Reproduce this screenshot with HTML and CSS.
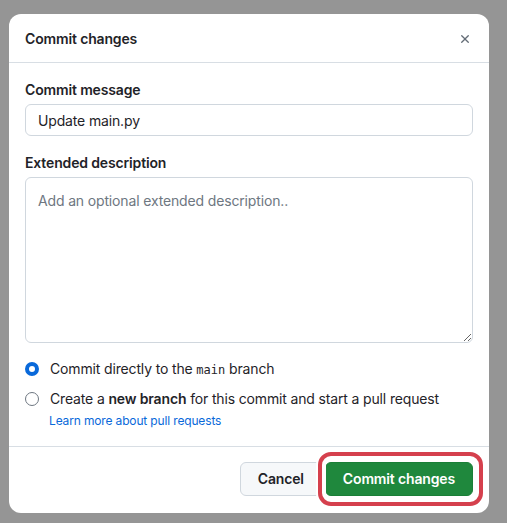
FILE: index.html
```html
<!DOCTYPE html>
<html lang="en">
<head>
<meta charset="utf-8">
<title>Commit changes</title>
<link rel="stylesheet" href="styles.css">
</head>
<body>
<div class="backdrop">
  <div class="dialog">
    <div class="dialog-header">
      <h1 class="dialog-title">Commit changes</h1>
      <button class="close-btn" aria-label="Close">
        <svg width="16" height="16" viewBox="0 0 16 16"><path d="M3.72 3.72a.75.75 0 0 1 1.06 0L8 6.94l3.22-3.22a.749.749 0 0 1 1.06 1.06L9.06 8l3.22 3.22a.749.749 0 0 1-1.060 1.06L8 9.06l-3.22 3.22a.749.749 0 0 1-1.06-1.06L6.94 8 3.72 4.780a.75.75 0 0 1 0-1.06Z" fill="currentColor"/></svg>
      </button>
    </div>
    <div class="dialog-body">
      <label class="field-label" for="msg">Commit message</label>
      <input class="text-input" id="msg" type="text" value="Update main.py">
      <label class="field-label second" for="desc">Extended description</label>
      <textarea class="text-area" id="desc" placeholder="Add an optional extended description.."></textarea>
      <div class="radio-group">
        <label class="radio-row">
          <span class="radio checked"></span>
          <span class="radio-text">Commit directly to the <code class="mono">main</code> branch</span>
        </label>
        <label class="radio-row">
          <span class="radio"></span>
          <span class="radio-text">Create a <strong>new branch</strong> for this commit and start a pull request</span>
        </label>
        <a class="learn-link" href="#">Learn more about pull requests</a>
      </div>
    </div>
    <div class="dialog-footer">
      <button class="btn btn-default">Cancel</button>
      <button class="btn btn-primary">Commit changes</button>
    </div>
  </div>
</div>
</body>
</html>
```
FILE: styles.css
```css
* { box-sizing: border-box; }
html, body {
  margin: 0;
  padding: 0;
  background: #959595;
}
body {
  font-family: Inter, "Liberation Sans", Arial, sans-serif;
  font-size: 14px;
  color: #1f2328;
  line-height: 20px;
  letter-spacing: -0.15px;
}
.backdrop {
  padding: 14px 18px 11px 9px;
}
.dialog {
  width: 480px;
  background: #ffffff;
  border-radius: 12px;
}
.dialog-header {
  height: 49px;
  display: flex;
  align-items: center;
  justify-content: space-between;
  padding: 1px 8px 0 16px;
  border-bottom: 1px solid #d8dee4;
}
.dialog-title {
  margin: 0;
  font-size: 14px;
  font-weight: 600;
  line-height: 20px;
}
.close-btn {
  width: 32px;
  height: 32px;
  border: 0;
  background: transparent;
  color: #636c76;
  display: flex;
  align-items: center;
  justify-content: center;
  padding: 0;
}
.close-btn svg { width: 14px; height: 14px; }
.dialog-body {
  padding: 17px 16px 16px 16px;
  display: flex;
  flex-direction: column;
}
.field-label {
  font-weight: 600;
  font-size: 14px;
  line-height: 20px;
  margin-bottom: 4px;
}
.field-label.second { margin-top: 17px; }
.text-input, .text-area {
  font-family: inherit;
  font-size: 14px;
  letter-spacing: -0.15px;
  color: #1f2328;
  border: 1px solid #d0d7de;
  border-radius: 6px;
  padding: 5px 12px;
  width: 448px;
  background: #fff;
  outline: none;
}
.text-input {
  height: 32px;
  line-height: 20px;
}
.text-area {
  height: 166px;
  padding: 13px 12px 8px 12px;
  line-height: 20px;
  resize: vertical;
}
.text-area::placeholder { color: #6e7781; }
.radio-group {
  margin-top: 16px;
  display: flex;
  flex-direction: column;
  gap: 10px;
}
.radio-row {
  display: flex;
  align-items: center;
  gap: 11px;
  height: 20px;
}
.radio {
  width: 14px;
  height: 14px;
  border-radius: 50%;
  border: 1px solid #6e7781;
  background: #fff;
  flex: none;
}
.radio.checked {
  border: 4px solid #0969da;
}
.mono {
  font-family: "DejaVu Sans Mono", "Liberation Mono", monospace;
  font-size: 12px;
  letter-spacing: 0;
}
.radio-text strong { font-weight: 600; }
.learn-link {
  margin-top: -7px;
  padding-left: 24px;
  font-size: 12px;
  line-height: 18px;
  color: #0969da;
  text-decoration: none;
}
.dialog-footer {
  border-top: 1px solid #d8dee4;
  padding: 15px 16px 17px 16px;
  display: flex;
  justify-content: flex-end;
  gap: 3px;
}
.btn {
  font-family: inherit;
  font-size: 14px;
  font-weight: 600;
  letter-spacing: -0.15px;
  height: 34px;
  padding: 0 16px;
  border-radius: 6px;
  line-height: 20px;
  cursor: pointer;
}
.btn-default {
  padding: 0 17px;
  background: #f6f8fa;
  color: #1f2328;
  border: 1px solid #d0d7de;
}
.btn-primary {
  position: relative;
  padding: 0 17px;
  background: #1f883d;
  color: #fff;
  border: 1px solid #1a7f37;
}
.btn-primary::after {
  content: "";
  position: absolute;
  left: -8px;
  top: -11px;
  right: -11px;
  bottom: -11px;
  border: 4px solid #d5404d;
  border-radius: 13px;
  box-shadow: 0 0 0 2px #ffffff, inset 0 0 0 4px #ffffff;
  pointer-events: none;
}
```
